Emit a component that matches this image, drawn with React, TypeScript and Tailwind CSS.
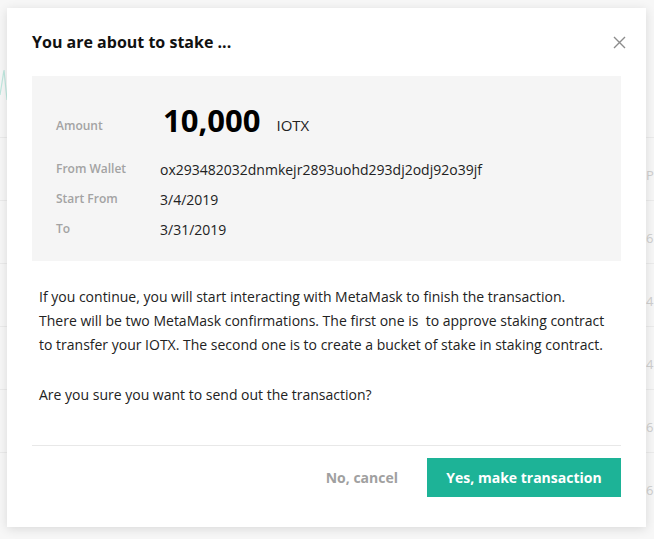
const rows = [
  { label: "From Wallet", value: "ox293482032dnmkejr2893uohd293dj2odj92o39jf" },
  { label: "Start From", value: "3/4/2019" },
  { label: "To", value: "3/31/2019" },
];

export default function App() {
  return (
    <div
      className="relative h-[539px] w-[654px] overflow-hidden bg-[#f7f7f7]"
      style={{ fontFamily: '"Open Sans", "Noto Sans", sans-serif' }}
    >
      {/* background page peeking around the modal */}
      <div className="absolute inset-0 flex flex-col pt-[137px]">
        {[0, 1, 2, 3, 4, 5].map((i) => (
          <div key={i} className="h-[63px] border-t border-[#ebebeb]" />
        ))}
      </div>
      <svg className="absolute left-0 top-[55px]" width="14" height="60" viewBox="0 0 14 60">
        <path d="M0 40 L4 15 L7 45 L10 20 L14 35" fill="none" stroke="#bfe8df" strokeWidth="1.2" />
      </svg>
      <div className="absolute right-0 top-0 flex w-[8px] flex-col pt-[166px] text-[13px] leading-[63px] text-[#cfcfcf]">
        <span className="-mt-[22px]">P</span>
        <span>6</span>
        <span>4</span>
        <span>4</span>
        <span>6</span>
        <span>6</span>
      </div>

      {/* modal */}
      <div className="absolute left-[7px] top-[8px] flex h-[519px] w-[639px] flex-col bg-white px-[25px] shadow-[0_2px_10px_rgba(0,0,0,0.12)]">
        <div className="flex h-[68px] items-center justify-between">
          <h2 className="text-[16px] font-bold text-[#111]">You are about to stake ...</h2>
          <svg width="13" height="13" viewBox="0 0 13 13" className="-mr-[5px]">
            <path d="M1 1 L12 12 M12 1 L1 12" stroke="#8c8c8c" strokeWidth="1.4" />
          </svg>
        </div>

        <div className="flex h-[185px] flex-col bg-[#f5f5f5] pl-[24px] pt-[24px]">
          <div className="flex h-[48px] items-center">
            <span className="mt-[4px] w-[107px] text-[12px] font-semibold text-[#a3a3a3]">Amount</span>
            <span className="-mt-[8px] text-[31px] font-bold leading-none text-black">10,000</span>
            <span className="ml-[16px] mt-[2px] text-[15px] text-[#222]">IOTX</span>
          </div>
          <div className="mt-[6px] flex flex-col">
            {rows.map((r) => (
              <div key={r.label} className="flex h-[30px] items-center">
                <span className="w-[104px] text-[12px] font-semibold text-[#a3a3a3]">{r.label}</span>
                <span className="text-[14px] text-[#222]">{r.value}</span>
              </div>
            ))}
          </div>
        </div>

        <div className="whitespace-pre px-[7px] pt-[24px] text-[14px] leading-[24px] text-[#222]">
          <p>
            If you continue, you will start interacting with MetaMask to finish the transaction.
            <br />
            There will be two MetaMask confirmations. The first one is  to approve staking contract
            <br />
            to transfer your IOTX. The second one is to create a bucket of stake in staking contract.
          </p>
          <p className="mt-[26px]">Are you sure you want to send out the transaction?</p>
        </div>

        <div className="mt-[38px] border-t border-[#e8e8e8]" />

        <div className="flex items-center justify-end pt-[12px]">
          <button className="mr-[29px] text-[14px] font-bold text-[#a0a0a0]">No, cancel</button>
          <button className="h-[39px] w-[194px] bg-[#1db397] text-[14px] font-bold text-white">
            Yes, make transaction
          </button>
        </div>
      </div>
    </div>
  );
}
